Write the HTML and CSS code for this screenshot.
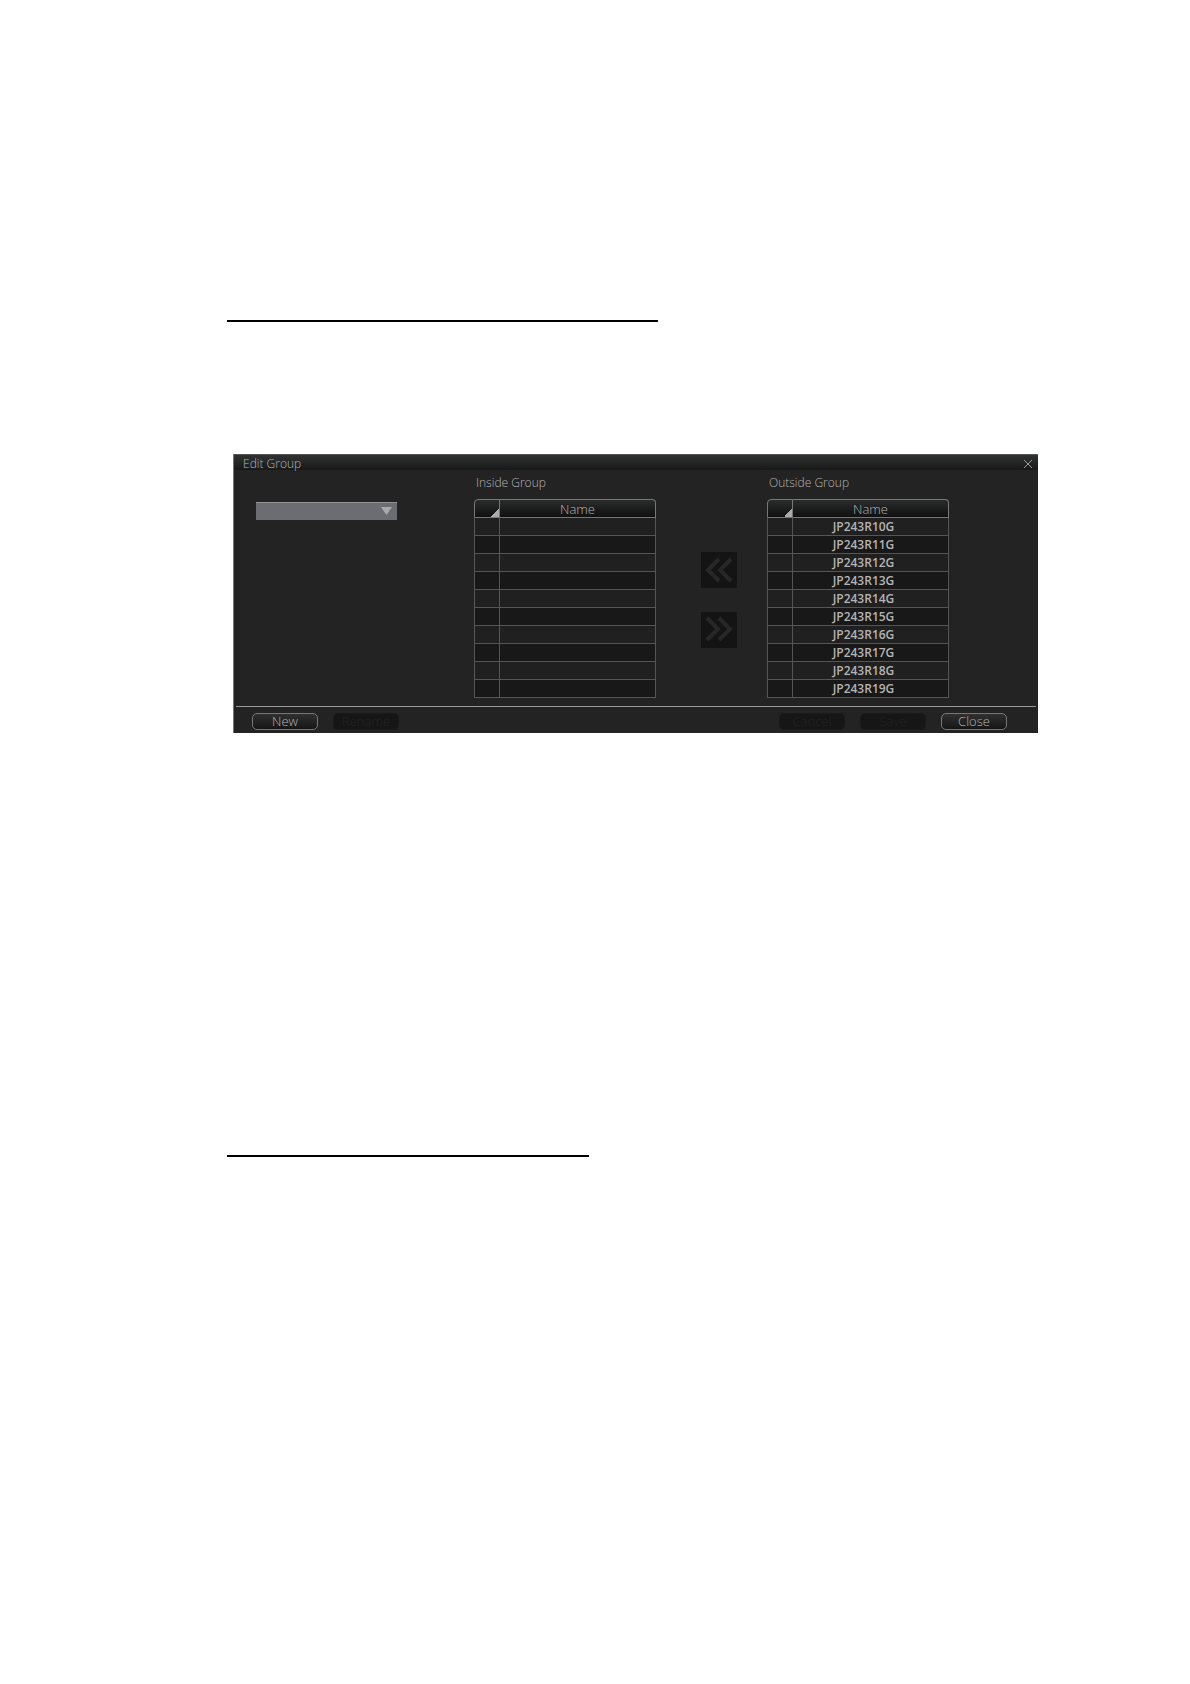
FILE: index.html
```html
<!DOCTYPE html>
<html lang="en">
<head>
<meta charset="utf-8">
<title>Edit Group</title>
<link rel="stylesheet" href="styles.css">
</head>
<body>
<main class="page">
  <hr class="rule rule-long">
  <section class="dialog" aria-labelledby="dialog-title">
    <header class="titlebar">
      <h1 class="title" id="dialog-title">Edit Group</h1>
      <button class="close-x" type="button" aria-label="Close dialog">
        <svg width="10" height="10" viewBox="0 0 10 10"><path d="M1 1L9 9M9 1L1 9" stroke="#999" fill="none"/></svg>
      </button>
    </header>
    <div class="body">
      <div class="picker">
        <select class="group-select" aria-label="Group"><option></option></select>
        <svg class="caret" width="11" height="8" viewBox="0 0 11 8"><path d="M0 0H11L5.500 8Z" fill="#a9aaae"/></svg>
      </div>
      <table class="list">
        <caption>Inside Group</caption>
        <thead><tr><th class="mark" aria-label="Select"></th><th>Name</th></tr></thead>
        <tbody>
          <tr><td></td><td></td></tr>
          <tr><td></td><td></td></tr>
          <tr><td></td><td></td></tr>
          <tr><td></td><td></td></tr>
          <tr><td></td><td></td></tr>
          <tr><td></td><td></td></tr>
          <tr><td></td><td></td></tr>
          <tr><td></td><td></td></tr>
          <tr><td></td><td></td></tr>
          <tr><td></td><td></td></tr>
        </tbody>
      </table>
      <div class="movers">
        <button class="mover" type="button" disabled aria-label="Move inside">
          <svg width="36" height="36" viewBox="0 0 36 36"><path d="M18 7L7 18L18 29M30 7L19 18L30 29" fill="none" stroke="#272727" stroke-width="4"/></svg>
        </button>
        <button class="mover" type="button" disabled aria-label="Move outside">
          <svg width="36" height="36" viewBox="0 0 36 36"><path d="M6 6L17 17L6 28M18 6L29 17L18 28" fill="none" stroke="#272727" stroke-width="4"/></svg>
        </button>
      </div>
      <table class="list">
        <caption>Outside Group</caption>
        <thead><tr><th class="mark" aria-label="Select"></th><th>Name</th></tr></thead>
        <tbody>
          <tr><td></td><td>JP243R10G</td></tr>
          <tr><td></td><td>JP243R11G</td></tr>
          <tr><td></td><td>JP243R12G</td></tr>
          <tr><td></td><td>JP243R13G</td></tr>
          <tr><td></td><td>JP243R14G</td></tr>
          <tr><td></td><td>JP243R15G</td></tr>
          <tr><td></td><td>JP243R16G</td></tr>
          <tr><td></td><td>JP243R17G</td></tr>
          <tr><td></td><td>JP243R18G</td></tr>
          <tr><td></td><td>JP243R19G</td></tr>
        </tbody>
      </table>
    </div>
    <footer class="footer">
      <div class="actions">
        <button class="btn" type="button">New</button>
        <button class="btn" type="button" disabled>Rename</button>
      </div>
      <div class="actions">
        <button class="btn" type="button" disabled>Cancel</button>
        <button class="btn" type="button" disabled>Save</button>
        <button class="btn" type="button">Close</button>
      </div>
    </footer>
  </section>
  <hr class="rule rule-short">
</main>
</body>
</html>
```
FILE: styles.css
```css
* { box-sizing: border-box; }

body {
  margin: 0;
  background: #fff;
  color: #b4b4b4;
  font-family: "Open Sans", "Noto Sans", sans-serif;
  font-size: 12px;
  font-weight: 300;
}

button, select { font: inherit; color: inherit; }

.page { padding: 320px 152px 527px 227px; }

.rule {
  height: 2px;
  margin: 0;
  border: 0;
  background: #000;
}
.rule-long { width: 431px; }
.rule-short { width: 362px; }

.dialog {
  margin: 132px 0 422px 6px;
  background: #232323;
  border-left: 1px solid #777;
}

.titlebar {
  display: flex;
  align-items: center;
  justify-content: space-between;
  height: 16px;
  padding: 3px 5px 0 9px;
  background: linear-gradient(#303232, #181818);
  border-top: 1px solid #555;
}
.title {
  margin: 0;
  font-size: 12px;
  font-weight: 300;
  line-height: 16px;
}
.close-x {
  display: flex;
  padding: 0;
  border: 0;
  background: none;
}

.body {
  display: grid;
  grid-template-columns: 218fr 227fr 66fr 271fr;
  align-items: start;
  padding: 5px 0 8px 22px;
}

.picker {
  position: relative;
  width: 141px;
  margin-top: 27px;
}
.group-select {
  display: block;
  width: 100%;
  height: 18px;
  appearance: none;
  background: #6c6d73;
  border: 0;
  border-top: 1px solid #929296;
  border-radius: 0;
}
.caret {
  position: absolute;
  top: 5px;
  right: 5px;
  pointer-events: none;
}

.list {
  width: 182px;
  border-collapse: separate;
  border-spacing: 0;
  table-layout: fixed;
}
.list caption {
  height: 24px;
  padding-left: 2px;
  line-height: 16px;
  text-align: left;
}
.list th,
.list td {
  height: 18px;
  padding: 0;
  border: 0 solid #555;
  border-width: 0 1px 1px 0;
  line-height: 16px;
  text-align: center;
}
.list th {
  height: 19px;
  font-size: 13px;
  font-weight: 300;
  background: linear-gradient(#2b2c2c, #101010);
  border-top: 1px solid #666;
  border-color: #777;
}
.list th:first-child,
.list td:first-child {
  width: 26px;
  border-left-width: 1px;
}
.list th:first-child { border-top-left-radius: 4px; }
.list th:last-child { border-top-right-radius: 4px; }
.list .mark {
  background:
    linear-gradient(135deg, transparent 50%, #aaa 50%) right bottom / 8px 8px no-repeat,
    linear-gradient(#2b2c2c, #101010);
}
.list td {
  font-weight: 600;
  padding-right: 14px;
}
.list tbody tr:nth-child(odd) { background: #202020; }
.list tbody tr:nth-child(even) { background: #181818; }

.movers {
  display: grid;
  gap: 24px;
  margin-top: 77px;
  width: 36px;
}
.mover {
  display: block;
  height: 36px;
  padding: 0;
  border: 0;
  background: #141414;
}

.footer {
  display: flex;
  justify-content: space-between;
  margin: 0 2px;
  padding: 6px 29px 3px 16px;
  border-top: 1px solid #999;
}
.actions { display: flex; gap: 15px; }
.btn {
  width: 66px;
  height: 17px;
  padding: 0;
  background: linear-gradient(#303030, #161616);
  border: 1px solid #777;
  border-radius: 5px;
  font-size: 13px;
  line-height: 15px;
}
.btn:disabled {
  background: #161616;
  border-color: #1a1a1a;
  color: #242424;
}
```
